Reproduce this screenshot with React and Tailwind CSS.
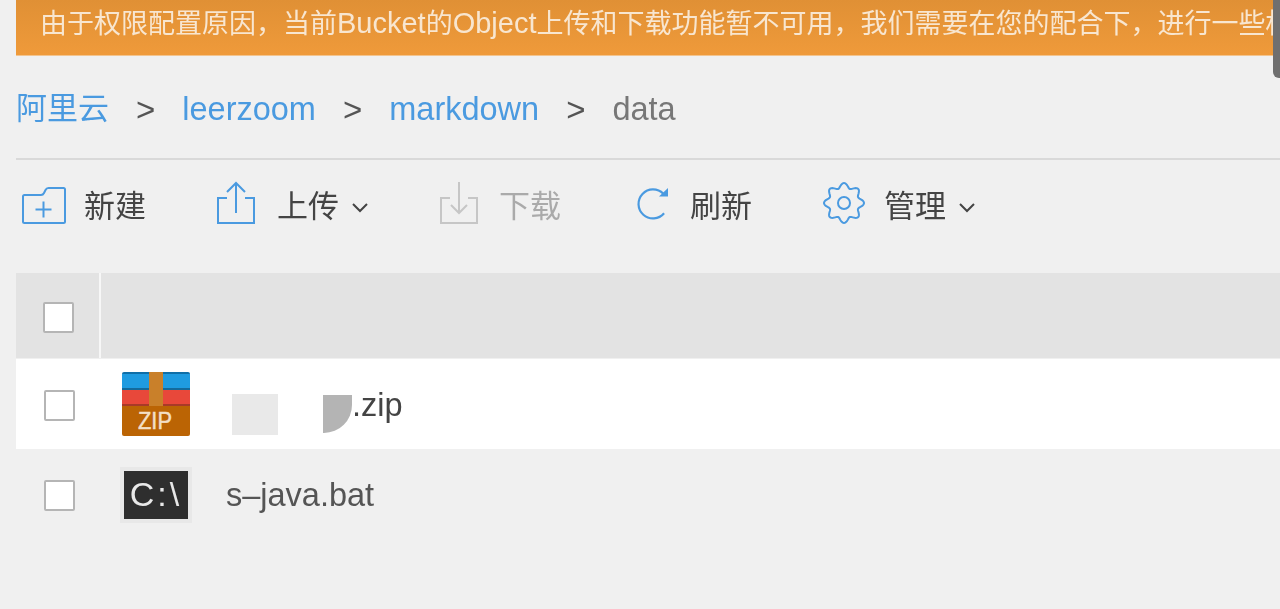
import React from 'react';

const sans = 'font-["Liberation_Sans","Noto_Sans_CJK_SC",sans-serif]';

// eight soft lobes, same shape as the reference gear
const gearPoints = Array.from({ length: 160 }, (_, i) => {
  const a = (i / 160) * Math.PI * 2;
  const r = 17.6 + 2.4 * Math.cos(8 * (a + Math.PI / 2));
  return `${(22 + r * Math.cos(a)).toFixed(2)},${(22 + r * Math.sin(a)).toFixed(2)}`;
}).join(' ');

const Chevron = () => (
  <svg viewBox="0 0 18 11" className="w-[18px] h-[11px]" fill="none" stroke="#444" strokeWidth="2">
    <path d="M2 2l7 7 7-7" />
  </svg>
);

const FolderIcon = () => (
  <svg viewBox="0 0 44 37" className="w-[44px] h-[37px] -mt-[2px]" fill="none" stroke="#4a9ae0" strokeWidth="2">
    <path d="M2.500 8H19q2 0 3-2l1.500-3q1-2 3-2h15q1.500 0 1.500 1.500v32q0 1.500-1.500 1.500H2.500Q1 36 1 34.500v-25Q1 8 2.500 8z" />
    <path d="M21.500 14.500v16M13.500 22.500h16" />
  </svg>
);

const UploadIcon = () => (
  <svg viewBox="0 0 40 44" className="w-[40px] h-[44px] -mt-[7px]" fill="none" stroke="#4a9ae0" strokeWidth="2">
    <path d="M11 17H2v25h36V17h-9" />
    <path d="M20 32V2M11 11l9-9 9 9" />
  </svg>
);

const DownloadIcon = () => (
  <svg viewBox="0 0 40 44" className="w-[40px] h-[44px] -mt-[7px]" fill="none" stroke="#c6c6c6" strokeWidth="2">
    <path d="M11 17H2v25h36V17h-9" />
    <path d="M20 1v31M12 24l8 8 8-8" />
  </svg>
);

const RefreshIcon = () => (
  <svg viewBox="0 0 32 34" className="w-[32px] h-[34px] -mt-[4px]" fill="none" stroke="#4a9ae0" strokeWidth="2.200">
    <path d="M26.300 6.700A14.500 14.500 0 1 0 27.100 26.300" />
    <path d="M31 1v8.500h-9z" fill="#4a9ae0" stroke="none" />
  </svg>
);

const GearIcon = () => (
  <svg viewBox="0 0 44 44" className="w-[44px] h-[44px] -mt-[6px]" fill="none" stroke="#4a9ae0" strokeWidth="2">
    <polygon points={gearPoints} />
    <circle cx="22" cy="22" r="6" />
  </svg>
);

const ZipIcon = () => (
  <svg viewBox="0 0 68 64" className="w-[68px] h-[64px] rounded-[2px]">
    <rect x="0" y="0" width="68" height="18" fill="#1f9be0" />
    <rect x="0" y="0" width="68" height="2" fill="#0f6fa8" />
    <rect x="0" y="16" width="68" height="2" fill="#136a9c" />
    <rect x="0" y="18" width="68" height="16" fill="#e8483a" />
    <rect x="0" y="32" width="68" height="2" fill="#a83a28" />
    <rect x="0" y="34" width="68" height="30" fill="#bb6404" />
    <rect x="27" y="0" width="14" height="34" fill="#c9802a" />
    <text x="33" y="57" textAnchor="middle" fontSize="24" fill="#f3dfc6" stroke="#f3dfc6" strokeWidth="0.5" fontFamily="Liberation Sans" textLength="34" lengthAdjust="spacingAndGlyphs">ZIP</text>
  </svg>
);

const Checkbox = () => (
  <div className="w-[31px] h-[31px] bg-white border-2 border-[#b5b5b5] rounded-[2px]" />
);

const Tool = ({ icon, label, muted, chevron, className }) => (
  <div className={`flex items-center ${className}`}>
    {icon}
    <span className={`flex items-center gap-[12px] text-[31px] leading-none ${muted ? 'text-[#aaaaaa]' : 'text-[#444444]'}`}>
      {label}
      {chevron && <span className="mt-[2px]"><Chevron /></span>}
    </span>
  </div>
);

const Sep = () => <span className="text-[#555555] text-[33px] mx-[27px]">&gt;</span>;

export default function App() {
  return (
    <div className="h-screen overflow-hidden bg-[#f0f0f0]">
      <div className={`relative h-screen blur-[0.6px] pl-4 ${sans}`}>
        <div className="h-[56px] flex items-center pb-[7px] pl-[24px] overflow-hidden bg-gradient-to-b from-[#e09035] to-[#ef9a3a] border-b border-[#f3c48e]">
          <span className="whitespace-nowrap text-[27px] text-[#f8e6d0]">
            由于权限配置原因，当前<span className="text-[29px]">Bucket</span>的<span className="text-[29px]">Object</span>上传和下载功能暂不可用，我们需要在您的配合下，进行一些权限配置
          </span>
        </div>

        <nav className="h-[104px] flex items-center pt-[5px] text-[31px] border-b-2 border-[#d9d9d9] whitespace-nowrap">
          <span className="text-[#4a9ae0]">阿里云</span>
          <Sep />
          <span className="text-[#4a9ae0] text-[32.5px]">leerzoom</span>
          <Sep />
          <span className="text-[#4a9ae0] text-[32.5px]">markdown</span>
          <Sep />
          <span className="text-[#777777] text-[32.5px]">data</span>
        </nav>

        <div className="h-[91px] flex items-center pl-[6px] pt-[1px]">
          <Tool icon={<FolderIcon />} label="新建" className="gap-[18px]" />
          <Tool icon={<UploadIcon />} label="上传" chevron className="gap-[21px] ml-[70px]" />
          <Tool icon={<DownloadIcon />} label="下载" muted className="gap-[20px] ml-[70px]" />
          <Tool icon={<RefreshIcon />} label="刷新" className="gap-[21px] ml-[76px]" />
          <Tool icon={<GearIcon />} label="管理" chevron className="gap-[18px] ml-[70px]" />
        </div>

        <div className="mt-[22px] h-[85px] flex bg-[#e3e3e3]">
          <div className="w-[83px] flex items-center justify-center pt-[3px] pl-[2px]"><Checkbox /></div>
          <div className="w-[2px] bg-[#f7f7f7]" />
        </div>

        <div className="mt-px h-[90px] flex items-center bg-white">
          <div className="w-[86px] flex justify-center pt-[3px]"><Checkbox /></div>
          <div className="ml-[20px]"><ZipIcon /></div>
          <div className="ml-[42px] mt-[21px] w-[46px] h-[41px] bg-[#e9e9e9]" />
          <div className="ml-[45px] mt-[20px] w-[29px] h-[38px] bg-[#b4b4b4] rounded-br-[28px]" />
          <span className="text-[32.5px] text-[#444444] mt-[2px]">.zip</span>
        </div>

        <div className="h-[91px] flex items-center">
          <div className="w-[86px] flex justify-center pt-[2px]"><Checkbox /></div>
          <div className="ml-[18px] p-[4px] bg-[#e8e8e8]">
            <div className="w-[64px] h-[48px] bg-[#2e2e2e] flex items-center justify-center text-[#e8e8e8] text-[34px] tracking-[3px]">C:\</div>
          </div>
          <span className="ml-[34px] text-[32.5px] text-[#555555] mt-[2px]">s–java.bat</span>
        </div>

        {/* scrollbar thumb */}
        <div className="absolute top-0 right-0 w-[7px] h-[78px] bg-[#6f6f6f] rounded-bl-[6px]" />
      </div>
    </div>
  );
}
